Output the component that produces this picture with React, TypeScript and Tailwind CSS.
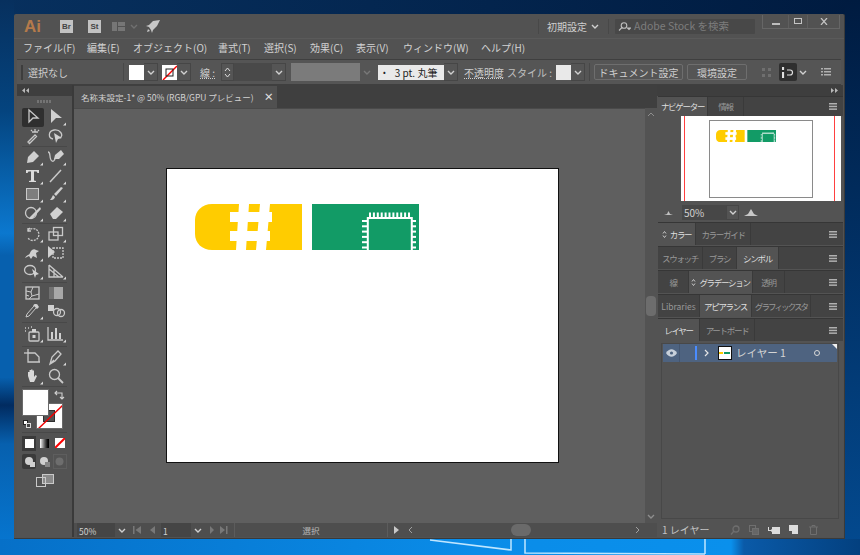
import type { ReactNode } from 'react';

const jp = "font-['Noto_Sans_CJK_JP','Liberation_Sans',sans-serif]";

function Chevron({ className = '', color = '#d0d0d0' }: { className?: string; color?: string }) {
  return (
    <svg className={className} width="8" height="5" viewBox="0 0 8 5" fill="none" stroke={color} strokeWidth="1.4">
      <path d="M1 1l3 3 3-3" />
    </svg>
  );
}

function ChevBox({ w = 'w-[14px]', color }: { w?: string; color?: string }) {
  return (
    <div className={`${w} h-[18px] flex items-center justify-center border border-l-0 border-[#464646]`}>
      <Chevron color={color} />
    </div>
  );
}

function Artwork({ width }: { width: number }) {
  return (
    <svg width={width} viewBox="0 0 224 46" className="block">
      <path d="M17 0H107V46H17C7 46 0 39 0 30V16C0 7 7 0 17 0Z" fill="#ffcc00" />
      <g fill="#fff">
        <path d="M44 0h10l-3 46H41z" />
        <path d="M65 0h10l-4 46H61z" />
        <rect x="35" y="8" width="42" height="10" />
        <rect x="35" y="27" width="40" height="10" />
      </g>
      <rect x="117" y="0" width="107" height="46" fill="#129b66" />
      <rect x="172.800" y="14" width="44" height="33" fill="none" stroke="#fff" strokeWidth="2" />
      <g fill="#fff">
        {[0, 1, 2, 3, 4, 5, 6, 7, 8, 9, 10].map((i) => (
          <rect key={i} x={174 + i * 3.9} y="8.500" width="2" height="5" />
        ))}
        {[0, 1, 2, 3, 4, 5].map((i) => (
          <g key={i}>
            <rect x="167" y={16 + i * 5.3} width="5" height="2" />
            <rect x="217" y={16 + i * 5.3} width="4" height="2" />
          </g>
        ))}
      </g>
    </svg>
  );
}

function Tool({ children, corner, active }: { children: ReactNode; corner?: boolean; active?: boolean }) {
  return (
    <div className={`w-[22px] h-[18.5px] flex items-center justify-center ${active ? 'bg-[#2f2f2f] rounded-[2px]' : ''}`}>
      <svg width="22" height="18" viewBox="0 0 22 18" fill="#c9c9c9" stroke="none">
        {children}
        {corner && <path d="M21 17.500h-3l3-3z" fill="#d8d8d8" />}
      </svg>
    </div>
  );
}

function ToolGroup({ children, className = 'py-[1px]' }: { children: ReactNode; className?: string }) {
  return <div className={`mx-[5px] grid grid-cols-[22px_22px] gap-x-[1px] border-b border-[#484848] ${className}`}>{children}</div>;
}

const line = { fill: 'none', stroke: '#c9c9c9', strokeWidth: 1.300 };

function Toolbar() {
  return (
    <div className="w-[55px] shrink-0 flex flex-col bg-[#535353]">
      <div className="h-[11px] bg-[#3e3e3e] flex items-center pl-[5px] text-[#b0b0b0]">
        <svg width="7" height="5" viewBox="0 0 7 5" fill="#b8b8b8"><path d="M3 0v5L0 2.500zM7 0v5L4 2.500z" /></svg>
      </div>
      <div className="h-[11px] flex items-center justify-center">
        <div className="w-[15px] h-[3px] bg-[repeating-linear-gradient(90deg,#747474_0_2px,transparent_2px_3px)]" />
      </div>
      <ToolGroup>
        <Tool active><path d="M7 2l9 8h-5l-4 4z" {...line} /></Tool>
        <Tool corner><path d="M6 1l11 9h-6l-5 5z" fill="#d0d0d0" /></Tool>
        <Tool><path d="M6 15l7-7 1.500 1.500-7 7z M13 2v3 M10 5h6 M16 3l1 1 M9 3l1 1" {...line} /></Tool>
        <Tool><path d="M8 12C3 11 3 4 9 3s10 5 6 8" {...line} /><path d="M9 6l8 5-4 1-2 4z" fill="#d0d0d0" /></Tool>
      </ToolGroup>
      <ToolGroup>
        <Tool corner><path d="M5 15l1-6 6-6 5 5-6 6z" fill="#d0d0d0" /></Tool>
        <Tool corner><path d="M3 4c3 0 1 5 3 8s4 0 4-2" {...line} /><path d="M9 11l1-4 6-5 3 4-5 5z" fill="#d0d0d0" /></Tool>
        <Tool corner><path d="M4 3h13v3h-1.500l-1-1.500H12v9l2 .5v1H7v-1l2-.5v-9H6.500L5.500 6H4z" fill="#dcdcdc" /></Tool>
        <Tool corner><path d="M5 15L16 3" {...line} strokeWidth={1.500} /></Tool>
        <Tool corner><rect x="4.500" y="3.500" width="12" height="11" fill="#7d7d7d" stroke="#c9c9c9" /></Tool>
        <Tool corner><path d="M16 2l2 1-7 8-2-2zM8 10l2 2c-1 3-3 3-5 3 1-1 2-3 3-5z" fill="#d0d0d0" /></Tool>
        <Tool corner><circle cx="9" cy="9" r="5.500" {...line} /><path d="M8 13L18 3l1 2L10 15H7z" fill="#d0d0d0" /></Tool>
        <Tool corner><path d="M5 10l7-7 6 5-7 7H8z" fill="#d0d0d0" /></Tool>
      </ToolGroup>
      <ToolGroup>
        <Tool corner><path d="M8 3l-2 2 M6 3v3h3" {...line} /><path d="M6 6a6 6 0 1 1 0 7" {...line} strokeDasharray="2 1" /></Tool>
        <Tool corner><rect x="4" y="7" width="9" height="8" {...line} /><rect x="8.500" y="2.500" width="9" height="8" {...line} /></Tool>
        <Tool corner><path d="M3 14c2-4 4-2 5-5s4-5 6-3l3 1-3 2 1 5-4-2-2 3-2-3z" fill="#d0d0d0" /></Tool>
        <Tool><path d="M3 2l7 6-7 6z" fill="#d0d0d0" /><rect x="8" y="4" width="10" height="10" {...line} strokeDasharray="2 1" /></Tool>
        <Tool corner><ellipse cx="8" cy="8" rx="5.500" ry="4.500" {...line} /><path d="M10 7l7 5-3 1-1 3z" fill="#d0d0d0" /></Tool>
        <Tool corner><path d="M4 3v12h14M4 3l14 12M4 7l10 8M9 7v8" {...line} /></Tool>
      </ToolGroup>
      <ToolGroup>
        <Tool><rect x="4" y="3" width="13" height="12" {...line} /><path d="M4 7l5 1 2-5M9 8l1 4 7-2M10 12l-3 3M4 11l3 1" {...line} strokeWidth={1} /></Tool>
        <Tool><rect x="4" y="3" width="14" height="12" fill="#a8a8a8" /><rect x="4" y="3" width="5" height="12" fill="#717171" /></Tool>
        <Tool corner><path d="M13 2l3 3-2 1-7 8-3 1 1-3 7-8z" fill="none" stroke="#c9c9c9" /><path d="M11 3l4 4 2-2-2-3z" fill="#d0d0d0" /></Tool>
        <Tool><rect x="3" y="3" width="6" height="6" fill="#d0d0d0" /><circle cx="12" cy="10" r="3.500" {...line} /><circle cx="16" cy="11" r="3.500" {...line} /></Tool>
      </ToolGroup>
      <ToolGroup className="py-[2.500px]">
        <Tool corner><rect x="7" y="7" width="10" height="9" rx="1" {...line} /><rect x="10" y="4" width="4" height="3" fill="#d0d0d0" /><path d="M3 3h1M6 3h1M3 6h1M9 2h1" {...line} /><rect x="10.500" y="10" width="3" height="3" fill="#d0d0d0" /></Tool>
        <Tool corner><path d="M3 2v13h15" {...line} /><path d="M6 7h2v7H6zM10 3h2v11h-2zM14 8h2v6h-2z" fill="#d0d0d0" /></Tool>
      </ToolGroup>
      <ToolGroup>
        <Tool><path d="M6 1v13h12" {...line} /><path d="M6 5h7l4 4v5" {...line} /><path d="M2 5h4" {...line} /></Tool>
        <Tool corner><path d="M5 16l2-7 6-6 3 3-6 7zM5 16l4-4" {...line} /></Tool>
        <Tool corner><path d="M6 9V5h1.500v3V3h1.500v5V2.500h1.500V8V3.500H12V10l1.500-2 1.500 1-3 6H8z" fill="#d8d8d8" /></Tool>
        <Tool><circle cx="9.500" cy="7.500" r="5" {...line} /><path d="M13 11l5 5" {...line} strokeWidth={1.800} /></Tool>
      </ToolGroup>
      <div className="relative h-[46px] border-b border-[#484848] mx-[5px]">
        <div className="absolute left-[14px] top-[16px] w-[27px] h-[26px] bg-white border border-[#6a6a6a] overflow-hidden">
          <div className="absolute left-[6px] top-[6px] w-[12px] h-[12px] bg-[#535353] border border-[#2f2f2f]" />
          <svg className="absolute inset-0" width="27" height="26"><path d="M0 26L27 0" stroke="#f00000" strokeWidth="1.400" /></svg>
        </div>
        <div className="absolute left-[0px] top-[2px] w-[27px] h-[27px] bg-white border border-[#6a6a6a]" />
        <svg className="absolute left-[32px] top-[3px]" width="11" height="11" viewBox="0 0 11 11" fill="none" stroke="#d0d0d0" strokeWidth="1.100">
          <path d="M1 3h7v6M3 1L1 3l2 2M6 7l2 2 2-2" />
        </svg>
        <div className="absolute left-[1px] top-[33px] w-[5px] h-[5px] bg-white border border-[#222]" />
        <div className="absolute left-[4px] top-[36px] w-[5px] h-[5px] bg-[#444] border border-[#ddd]" />
      </div>
      <div className="mx-[5px] py-[3px] h-[20px] flex items-center gap-[1px]">
        <div className="w-[15px] h-[15px] bg-[#3a3a3a] flex items-center justify-center"><div className="w-[9px] h-[9px] bg-white" /></div>
        <div className="w-[15px] h-[15px] flex items-center justify-center"><div className="w-[9px] h-[9px] bg-gradient-to-r from-white to-black" /></div>
        <div className="w-[15px] h-[15px] flex items-center justify-center">
          <svg width="10" height="10"><rect width="10" height="10" fill="#fff" /><path d="M0 10L10 0" stroke="#f00" strokeWidth="2" /></svg>
        </div>
      </div>
      <div className="mx-[5px] mt-[1px] h-[15px] flex items-center gap-[1px]">
        <div className="w-[15px] h-[15px] bg-[#3a3a3a] rounded-[2px] flex items-center justify-center">
          <svg width="11" height="11" fill="#d0d0d0"><circle cx="5" cy="5" r="4" /><rect x="6" y="6" width="5" height="5" /></svg>
        </div>
        <div className="w-[15px] h-[15px] flex items-center justify-center">
          <svg width="11" height="11" fill="#d0d0d0"><circle cx="5" cy="5" r="4" /><rect x="6" y="6" width="5" height="5" fill="#888" /></svg>
        </div>
        <div className="w-[15px] h-[15px] flex items-center justify-center border border-[#5e5e5e]">
          <svg width="9" height="9" fill="#6e6e6e"><circle cx="4.500" cy="4.500" r="4" /></svg>
        </div>
      </div>
      <div className="mt-[5px] flex justify-center">
        <svg width="18" height="13" viewBox="0 0 18 13" fill="none" stroke="#c9c9c9">
          <rect x="6.500" y="0.500" width="11" height="9" fill="#8a8a8a" />
          <rect x="0.500" y="3.500" width="9" height="9" />
        </svg>
      </div>
    </div>
  );
}

function ControlBar() {
  return (
    <div className={`mx-[3px] h-[26px] shrink-0 flex items-center bg-[#555555] border-y border-[#3f3f3f] text-[10px] text-[#cfcfcf] ${jp}`}>
      <div className="ml-[4px] w-[2px] h-[15px] bg-[#3d3d3d]" />
      <span className="ml-[5px] w-[95px] whitespace-nowrap">選択なし</span>
      <div className="w-px h-[18px] bg-[#484848]" />
      <div className="ml-[5px] w-[15px] h-[15px] bg-white" />
      <ChevBox />
      <div className="ml-[4px] w-[15px] h-[15px] bg-white">
        <svg width="15" height="15"><path d="M1 15L15 1" stroke="#f00" strokeWidth="1.400" /><rect x="4" y="4" width="7" height="7" fill="none" stroke="#222" /></svg>
      </div>
      <ChevBox />
      <span className="ml-[9px] w-[21px] underline decoration-dotted whitespace-nowrap">線 :</span>
      <div className="w-[13px] h-[18px] flex flex-col items-center justify-center gap-[3px] border border-[#464646]">
        <svg width="7" height="4" fill="none" stroke="#ddd"><path d="M1 4l2.500-3L6 4" /></svg>
        <svg width="7" height="4" fill="none" stroke="#ddd"><path d="M1 0l2.500 3L6 0" /></svg>
      </div>
      <div className="w-[38px] h-[18px] bg-[#494949]" />
      <ChevBox />
      <div className="ml-[5px] w-[69px] h-[18px] bg-[#7b7b7b]" />
      <div className="w-[14px] h-[18px] flex items-center justify-center"><Chevron color="#787878" /></div>
      <div className="ml-[4px] w-[66px] h-[15px] bg-[#e9e9e9] text-[#222] flex items-center pl-[5px] whitespace-nowrap">
        <span className="text-[8px] mr-[9px]">•</span>3 pt. 丸筆
      </div>
      <ChevBox />
      <span className="ml-[6px] underline decoration-dotted whitespace-nowrap">不透明度</span>
      <span className="ml-[3px] w-[49px] whitespace-nowrap text-[#c0c0c0]">スタイル :</span>
      <div className="w-[15px] h-[15px] bg-[#e9e9e9]" />
      <ChevBox />
      <div className="ml-[4px] w-px h-[18px] bg-[#484848]" />
      <div className="ml-[4px] w-[89px] h-[16px] border border-[#6e6e6e] rounded-[2px] flex items-center justify-center whitespace-nowrap">ドキュメント設定</div>
      <div className="ml-[4px] w-[60px] h-[16px] border border-[#6e6e6e] rounded-[2px] flex items-center justify-center whitespace-nowrap">環境設定</div>
      <svg className="ml-[15px]" width="9" height="9" fill="#6f6f6f"><rect width="3" height="3" /><rect x="6" width="3" height="3" /><rect y="6" width="3" height="3" /><rect x="6" y="6" width="3" height="3" /></svg>
      <div className="ml-[8px] w-[18px] h-[18px] bg-[#2f2f2f] rounded-[2px] flex items-center justify-center">
        <svg width="12" height="11" fill="none" stroke="#e0e0e0" strokeWidth="1.200"><path d="M1 0v3M1 5v6" strokeWidth="2.200" /><path d="M5 3h3a2.500 2.500 0 0 1 0 5H5" /></svg>
      </div>
      <Chevron className="ml-[2px]" />
      <svg className="ml-[14px]" width="10" height="8" fill="#b0b0b0"><path d="M0 0h2v1.500H0zM3 0h7v1.500H3zM0 3h2v1.500H0zM3 3h7v1.500H3zM0 6h2v1.500H0zM3 6h7v1.500H3z" /></svg>
    </div>
  );
}

function Doc() {
  return (
    <div className="w-[583px] shrink-0 flex flex-col">
      <div className="h-[23px] shrink-0 bg-[#3f3f3f] flex items-end pt-[1px]">
        <div className={`w-[203px] h-[22px] bg-[#505050] flex items-center pl-[7px] text-[8.500px] text-[#d2d2d2] whitespace-nowrap ${jp}`}>
          <span>名称未設定-1* @ 50% (RGB/GPU プレビュー)</span>
          <span className="ml-[10px] text-[10px] font-bold text-[#e0e0e0] leading-none">×</span>
        </div>
      </div>
      <div className="flex-1 flex min-h-0">
        <div className="flex-1 bg-[#5f5f5f] pl-[92px] pt-[59px] border-t border-[#4a4a4a]">
          <div className="w-[393px] h-[295px] bg-white border border-[#111] pl-[28px] pt-[35px]">
            <Artwork width={224} />
          </div>
        </div>
        <div className="w-[12px] shrink-0 bg-[#535353] flex flex-col items-center justify-between py-[4px] relative">
          <svg width="8" height="5" fill="none" stroke="#8e8e8e"><path d="M1 4l3-3 3 3" /></svg>
          <div className="w-[10px] h-[20px] bg-[#6d6d6d] rounded-[4px] mt-[-20px]" />
          <Chevron color="#8e8e8e" />
        </div>
      </div>
      <div className={`h-[14px] shrink-0 bg-[#4e4e4e] flex items-center text-[8.500px] text-[#d0d0d0] ${jp}`}>
        <div className="ml-[3px] w-[38px] h-[14px] bg-[#454545] flex items-end pl-[2px] leading-[12px]">50%</div>
        <div className="w-[14px] flex justify-center"><Chevron /></div>
        <svg className="ml-[4px]" width="26" height="8" fill="#787878"><path d="M0 0h1.500v8H0zM8 0v8L2.500 4zM22 0v8l-5-4z" /></svg>
        <div className="ml-[2px] w-[30px] h-[14px] bg-[#454545] flex items-end pl-[2px] leading-[12px]">1</div>
        <div className="w-[14px] flex justify-center"><Chevron /></div>
        <svg className="ml-[5px]" width="22" height="8" fill="#787878"><path d="M0 0l4 4-4 4zM10 0l5 4-5 4zM16 0h1.500v8H16z" /></svg>
        <div className="ml-[2px] w-[154px] h-[14px] border-x border-[#5c5c5c] flex items-center justify-center text-[#b8b8b8]">選択</div>
        <svg className="ml-[6px]" width="6" height="8" fill="#c8c8c8"><path d="M0 0l5 4-5 4z" /></svg>
        <svg className="ml-[8px]" width="5" height="8" fill="none" stroke="#a0a0a0"><path d="M4 1L1 4l3 3" /></svg>
        <div className="flex-1 flex items-center pl-[98px]"><div className="w-[20px] h-[12px] rounded-full bg-[#6a6a6a]" /></div>
        <svg className="mr-[17px]" width="5" height="8" fill="none" stroke="#a0a0a0"><path d="M1 1l3 3-3 3" /></svg>
      </div>
    </div>
  );
}

type PanelTab = { label: string; w: string; on?: boolean; grip?: boolean; latin?: boolean; tight?: boolean };

function Tabs({ tabs, className = 'h-[23px]' }: { tabs: PanelTab[]; className?: string }) {
  return (
    <div className={`${className} shrink-0 bg-[#434343] flex items-stretch border-t border-[#363636] ml-px text-[8.500px] ${jp}`}>
      {tabs.map((t) => (
        <div key={t.label} className={`${t.w} flex items-center justify-center border-r border-[#3a3a3a] whitespace-nowrap ${t.latin ? '' : t.tight ? 'tracking-[-1.900px]' : 'tracking-[-1.300px]'} ${t.on ? 'bg-[#535353] text-[#dedede]' : 'text-[#989898]'}`}>
          {t.grip && (
            <svg className="mr-[3px] shrink-0" width="5" height="9" fill="none" stroke="#c8c8c8"><path d="M1 3.500l1.500-2 1.500 2M1 5.500l1.500 2 1.500-2" /></svg>
          )}
          {t.label}
        </div>
      ))}
      <div className="flex-1 flex items-center justify-end pr-[6px]">
        <svg width="8" height="7" fill="#b0b0b0"><rect width="8" height="1.500" /><rect y="2.700" width="8" height="1.500" /><rect y="5.400" width="8" height="1.500" /></svg>
      </div>
    </div>
  );
}

function Panels() {
  return (
    <div className="w-[186px] shrink-0 flex flex-col bg-[#535353]">
      <div className="h-[11px] shrink-0 bg-[#3e3e3e] flex items-center justify-end pr-[5px]">
        <svg width="7" height="5" fill="#b8b8b8"><path d="M0 0v5l3-2.500zM4 0v5l3-2.500z" /></svg>
      </div>
      <Tabs className="h-[20px]" tabs={[{ label: 'ナビゲーター', w: 'w-[50px]', on: true }, { label: '情報', w: 'w-[36px]' }]} />
      <div className="h-[85px] shrink-0 ml-[24px] mr-[2px] bg-white pl-[28px] pt-[4px] relative">
        <div className="absolute left-[3px] top-0 bottom-0 w-px bg-[#ff4040]" />
        <div className="absolute left-[153px] top-0 bottom-0 w-px bg-[#ff4040]" />
        <div className="w-[104px] h-[78px] border border-[#8a8a8a] pl-[6px] pt-[9px]">
          <Artwork width={60} />
        </div>
      </div>
      <div className="h-[21px] shrink-0 flex items-center text-[10px] text-[#d0d0d0] pl-[7px] pt-[1px]">
        <svg width="9" height="5" fill="#c0c0c0"><path d="M0 5l3-1 1.500-3L6 4l3 1z" /></svg>
        <div className={`ml-[9px] w-[44px] h-[15px] bg-[#474747] flex items-center pl-[2px] ${jp}`}>50%</div>
        <div className="w-[13px] h-[15px] flex items-center justify-center border border-[#464646]"><Chevron /></div>
        <svg className="ml-[5px]" width="14" height="7" fill="#c8c8c8"><path d="M0 7l4-2 3-5 3 5 4 2z" /></svg>
      </div>
      <Tabs tabs={[{ label: 'カラー', w: 'w-[38px]', on: true, grip: true }, { label: 'カラーガイド', w: 'w-[55px]' }]} />
      <div className="h-px shrink-0" />
      <Tabs tabs={[{ label: 'スウォッチ', w: 'w-[45px]' }, { label: 'ブラシ', w: 'w-[34px]' }, { label: 'シンボル', w: 'w-[42px]', on: true }]} />
      <div className="h-px shrink-0" />
      <Tabs tabs={[{ label: '線', w: 'w-[31px]' }, { label: 'グラデーション', w: 'w-[64px]', on: true, grip: true }, { label: '透明', w: 'w-[32px]' }]} />
      <div className="h-px shrink-0" />
      <Tabs tabs={[{ label: 'Libraries', w: 'w-[42px]', latin: true }, { label: 'アピアランス', w: 'w-[52px]', on: true }, { label: 'グラフィックスタ', w: 'w-[59px]', tight: true }]} />
      <div className="h-px shrink-0" />
      <Tabs tabs={[{ label: 'レイヤー', w: 'w-[42px]', on: true }, { label: 'アートボード', w: 'w-[55px]' }]} />
      <div className="flex-1 min-h-0 mx-[4px] mt-[2px] border border-[#484848]">
        <div className={`relative h-[18px] mx-px bg-[#4e6380] flex items-center text-[10.500px] text-[#d4d4d4] ${jp}`}>
          <svg className="ml-[3px]" width="11" height="8" viewBox="0 0 11 8"><path d="M0 4c3-5 8-5 11 0-3 5-8 5-11 0z" fill="#c8d0da" /><circle cx="5.500" cy="4" r="1.600" fill="#4e6380" /></svg>
          <div className="ml-[2px] w-px h-[18px] bg-[#445670]" />
          <div className="ml-[15px] w-[2px] h-[14px] bg-[#4a8cff]" />
          <svg className="ml-[7px]" width="5" height="8" fill="none" stroke="#e6e6e6" strokeWidth="1.200"><path d="M1 1l3 3-3 3" /></svg>
          <div className="ml-[9px] w-[14px] h-[14px] bg-white border border-[#111] flex items-center">
            <div className="w-[4px] h-[2px] bg-[#ffcc00]" />
            <div className="ml-[1px] w-[6px] h-[2px] bg-[#129b66]" />
          </div>
          <span className="ml-[4px] whitespace-nowrap">レイヤー 1</span>
          <div className="ml-[28px] w-[6px] h-[6px] rounded-full border border-[#d8d8d8]" />
          <svg className="absolute right-0 top-0" width="5" height="5" fill="#f0f0f0"><path d="M0 0h5v5z" /></svg>
        </div>
      </div>
      <div className={`h-[18px] shrink-0 flex items-center pl-[5px] pt-[3px] text-[10px] text-[#c4c4c4] ${jp}`}>
        <span className="w-[68px] whitespace-nowrap">1 レイヤー</span>
        <svg width="10" height="10" fill="none" stroke="#6f6f6f" strokeWidth="1.300"><circle cx="6" cy="4" r="3" /><path d="M4 6L1 9.500" /></svg>
        <svg className="ml-[9px]" width="10" height="10" fill="none" stroke="#6f6f6f"><rect x="0.500" y="0.500" width="6" height="6" /><rect x="3.500" y="3.500" width="6" height="6" fill="#666" /></svg>
        <svg className="ml-[9px]" width="12" height="8" fill="#dcdcdc"><path d="M4 1h8v7H4zM0 1h1v3h2V3l2 1.500L3 6V5H0z" /></svg>
        <svg className="ml-[9px]" width="9" height="9" fill="#dcdcdc"><path d="M0 0h9v9H3V6H0z" /></svg>
        <svg className="ml-[11px]" width="9" height="10" fill="none" stroke="#6f6f6f"><path d="M0 2h9M3 2V.5h3V2M1.500 2v7.500h6V2" /></svg>
      </div>
    </div>
  );
}

export default function App() {
  const menus = [
    ['ファイル(F)', 'w-[64px]'],
    ['編集(E)', 'w-[46px]'],
    ['オブジェクト(O)', 'w-[85px]'],
    ['書式(T)', 'w-[46px]'],
    ['選択(S)', 'w-[46px]'],
    ['効果(C)', 'w-[46px]'],
    ['表示(V)', 'w-[47px]'],
    ['ウィンドウ(W)', 'w-[78px]'],
    ['ヘルプ(H)', 'w-[50px]'],
  ];
  return (
    <div className="relative w-[860px] h-[555px] overflow-hidden pl-[14px] pt-[14px]">
      <svg className="absolute inset-0" width="860" height="555">
        <defs>
          <linearGradient id="top" x1="0" x2="1" y1="0" y2="0"><stop offset="0" stopColor="#07305e" /><stop offset="1" stopColor="#001b40" /></linearGradient>
          <linearGradient id="left" x1="0" x2="0" y1="0" y2="1">
            <stop offset="0" stopColor="#07305e" />
            <stop offset="0.2" stopColor="#04447f" />
            <stop offset="0.42" stopColor="#0b78cf" />
            <stop offset="0.46" stopColor="#0760ae" />
            <stop offset="0.68" stopColor="#0760ae" />
            <stop offset="0.73" stopColor="#012b60" />
            <stop offset="0.8" stopColor="#0760ae" />
            <stop offset="1" stopColor="#0678d4" />
          </linearGradient>
          <linearGradient id="right" x1="0" x2="0" y1="0" y2="1"><stop offset="0" stopColor="#001b40" /><stop offset="1" stopColor="#034a90" /></linearGradient>
          <linearGradient id="bottom" x1="0" x2="1" y1="0" y2="0">
            <stop offset="0" stopColor="#0670c8" />
            <stop offset="0.55" stopColor="#0a8ce8" />
            <stop offset="0.85" stopColor="#0a90ec" />
            <stop offset="0.865" stopColor="#0a5aa8" />
            <stop offset="1" stopColor="#03407f" />
          </linearGradient>
        </defs>
        <rect width="860" height="555" fill="url(#top)" />
        <rect y="0" width="14" height="555" fill="url(#left)" />
        <rect x="845" y="0" width="15" height="555" fill="url(#right)" />
        <rect y="539" width="860" height="16" fill="url(#bottom)" />
        <path d="M430 540l81 10v-11M525 539v14l180 1M705 539v15" fill="none" stroke="#bfe6ff" strokeWidth="1.500" />
      </svg>
      <div className="relative w-[831px] h-[525px] bg-[#525252] flex flex-col rounded-t-[2px] border-r border-b border-[#3a3a3a]">
        <div className={`h-[24px] shrink-0 flex items-center text-[10px] text-[#cfcfcf] ${jp}`}>
          <span className="ml-[10px] w-[18px] text-[17px] leading-none font-['Liberation_Sans',sans-serif] font-bold text-[#b47a4b]">Ai</span>
          <div className="ml-[18px] w-[13px] h-[13px] bg-[#c2c2c2] text-[#444] text-[8px] font-bold leading-[13px] text-center font-['Liberation_Sans',sans-serif]">Br</div>
          <div className="ml-[15px] w-[13px] h-[13px] bg-[#c2c2c2] text-[#444] text-[8px] font-bold leading-[13px] text-center font-['Liberation_Sans',sans-serif]">St</div>
          <svg className="ml-[11px]" width="13" height="9" fill="#767676"><rect width="5" height="9" /><rect x="6" width="7" height="4" /><rect x="6" y="5" width="7" height="4" /></svg>
          <Chevron className="ml-[5px]" color="#707070" />
          <svg className="ml-[8px]" width="14" height="13" viewBox="0 0 14 13" fill="#c8c8c8"><path d="M14 0L7 1 3 5l-3 1 3 1 2 3 1 3 1-3 4-4zM2 9l-1 3 3-1z" /></svg>
          <div className="ml-[378px] w-px h-[15px] bg-[#484848]" />
          <span className="ml-[8px] w-[40px] whitespace-nowrap">初期設定</span>
          <Chevron className="ml-[4px]" />
          <div className="ml-[9px] w-px h-[15px] bg-[#484848]" />
          <div className="ml-[6px] w-[140px] h-[15px] bg-[#484848] rounded-[1px] flex items-center pl-[3px] text-[#7d7d7d] whitespace-nowrap">
            <svg width="13" height="9" fill="none" stroke="#c0c0c0" strokeWidth="1.100"><circle cx="6" cy="3.500" r="2.800" /><path d="M4 5.500L1 8.500M9.500 6h3l-1.500 1.500z" /></svg>
            <span className="ml-[3px] text-[10.500px]">Adobe Stock を検索</span>
          </div>
          <div className="ml-[7px] mb-[9px] w-[78px] h-[14px] border border-t-0 border-[#666] flex text-[#c0c0c0]">
            <div className="w-[25px] flex items-end justify-center pb-[3px]"><div className="w-[8px] h-[2px] bg-[#bdbdbd]" /></div>
            <div className="w-[20px] border-x border-[#5f5f5f] flex items-center justify-center"><div className="w-[8px] h-[6px] border border-[#c4c4c4]" /></div>
            <div className="flex-1 flex items-center justify-center">
              <svg width="8" height="7" stroke="#c4c4c4" strokeWidth="1.200"><path d="M1 0l6 7M7 0L1 7" /></svg>
            </div>
          </div>
        </div>
        <div className={`h-[21px] shrink-0 flex items-center pl-[9px] pb-[3px] text-[10px] text-[#d2d2d2] border-t border-[#5a5a5a] ${jp}`}>
          {menus.map(([m, w]) => (
            <span key={m} className={`${w} whitespace-nowrap`}>{m}</span>
          ))}
        </div>
        <ControlBar />
        <div className="flex-1 min-h-0 flex mx-[3px] mb-px">
          <Toolbar />
          <div className="w-[2px] shrink-0 bg-[#3a3a3a]" />
          <Doc />
          <Panels />
        </div>
      </div>
    </div>
  );
}
